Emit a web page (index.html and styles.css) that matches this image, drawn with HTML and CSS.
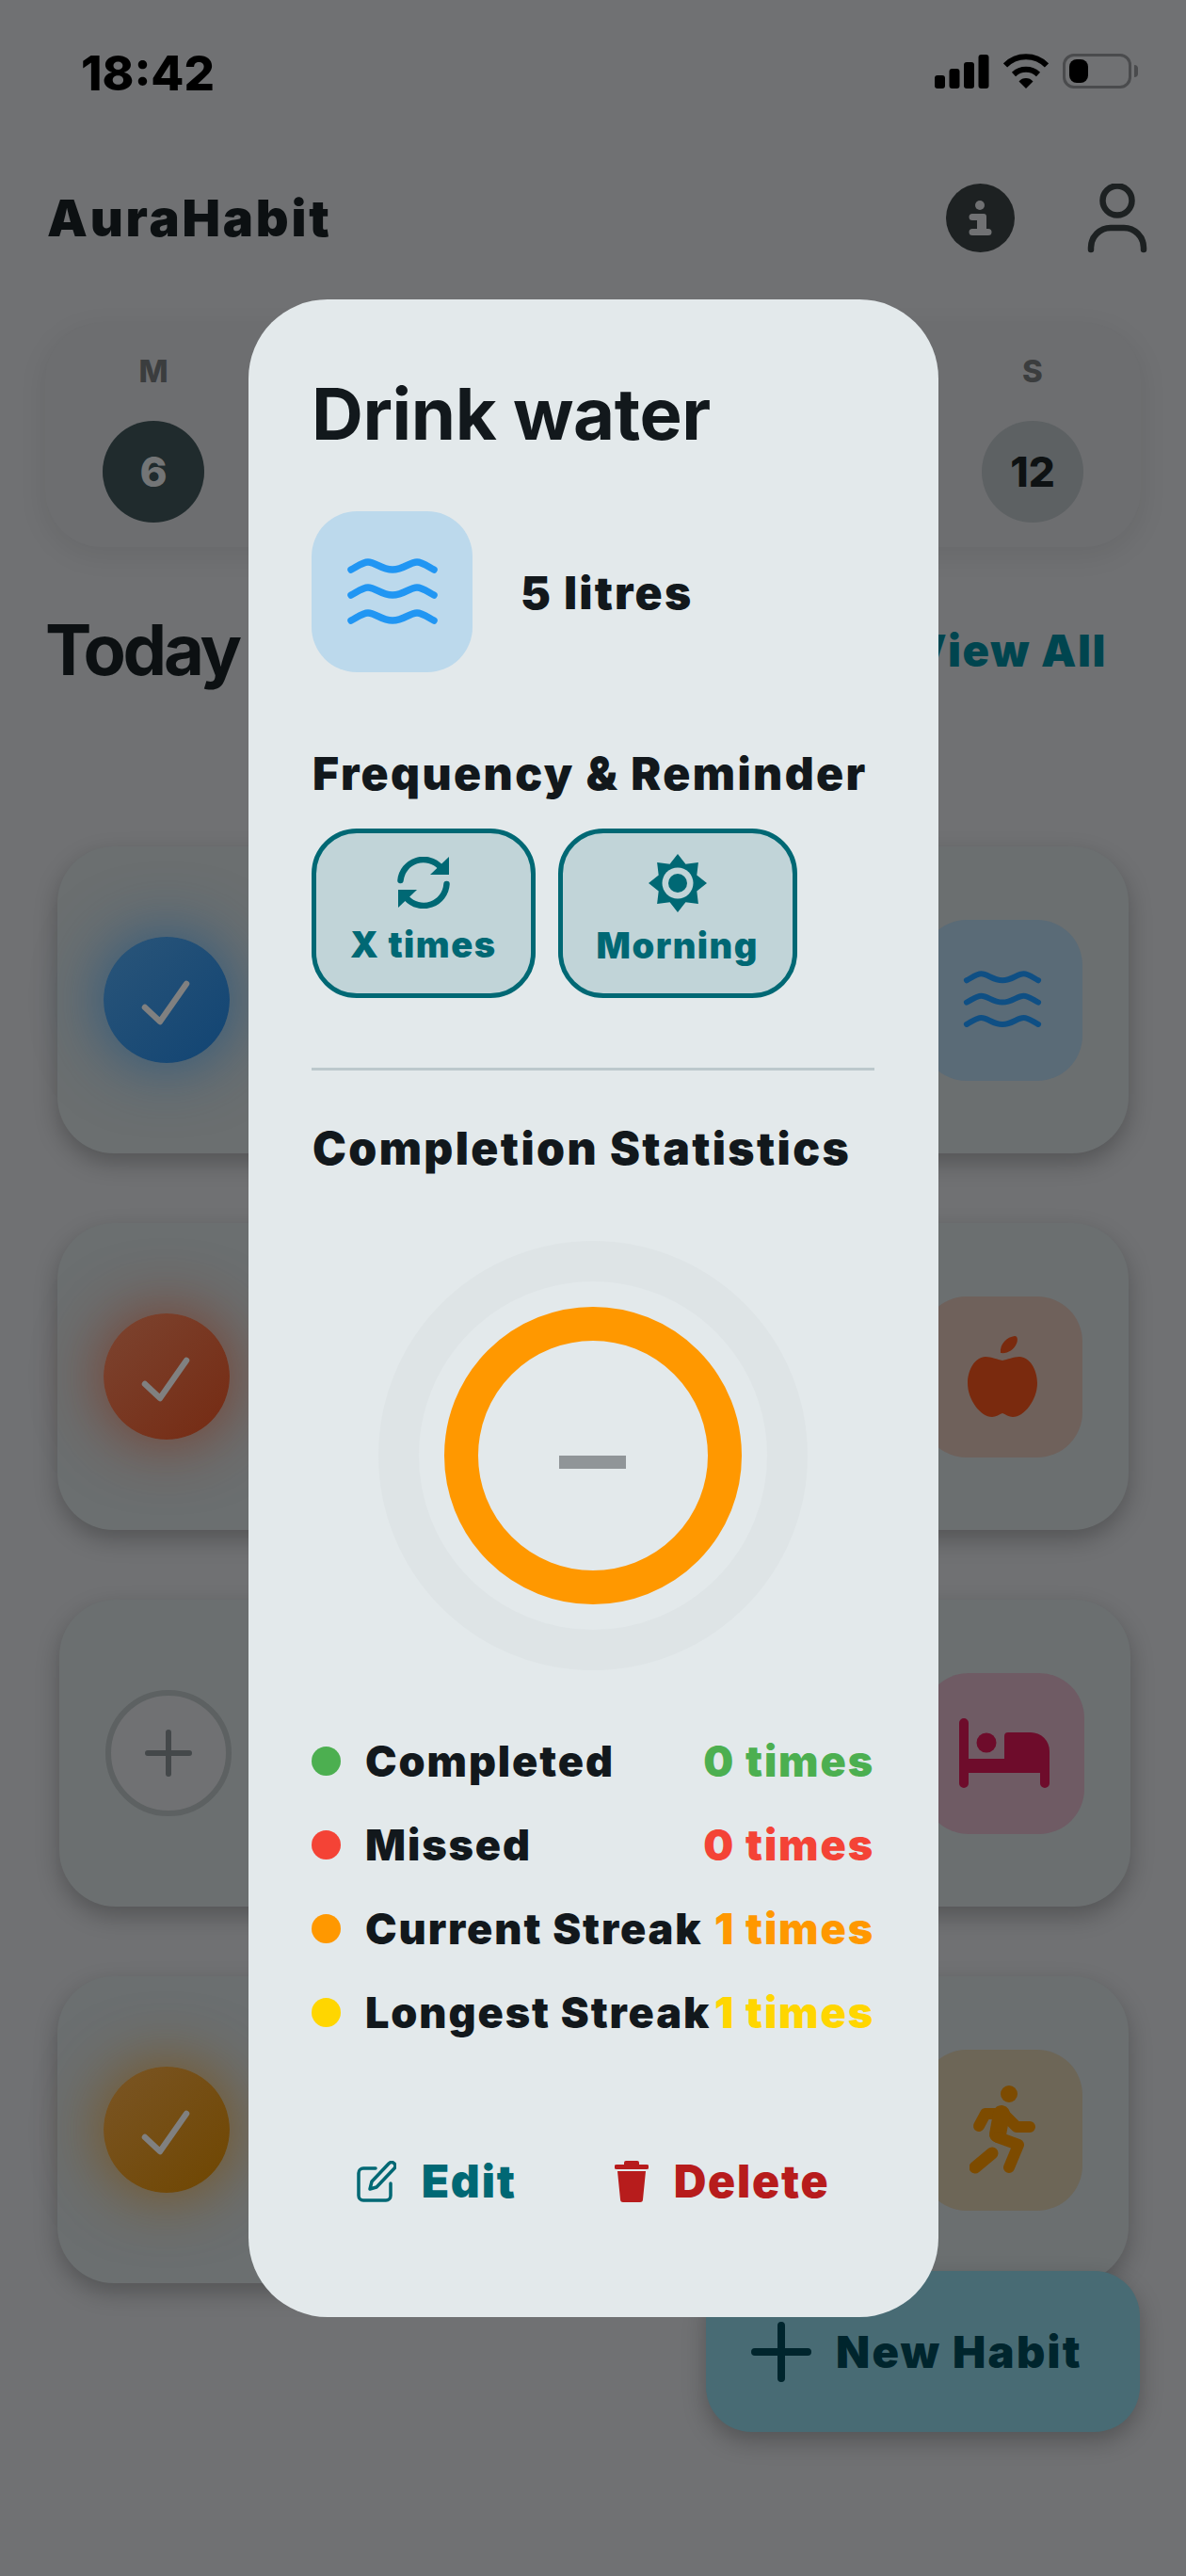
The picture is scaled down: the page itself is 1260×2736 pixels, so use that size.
FILE: index.html
```html
<!DOCTYPE html>
<html lang="en">
<head>
    <meta charset="UTF-8">
    <meta name="viewport" content="width=device-width, initial-scale=1.0">
    <title>AuraHabit</title>
    <link rel="stylesheet" href="styles.css">
</head>
<body>
    <div class="screen">
        <!-- Status bar -->
        <div class="status-bar">
            <span class="clock">18:42</span>
            <div class="status-icons">
                <svg width="58" height="36" viewBox="0 0 58 36" fill="#000">
                    <rect x="0" y="22" width="11" height="14" rx="3"/>
                    <rect x="15.5" y="15" width="11" height="21" rx="3"/>
                    <rect x="31" y="8" width="11" height="28" rx="3"/>
                    <rect x="46.5" y="0" width="11" height="36" rx="3"/>
                </svg>
                <svg width="48" height="37" viewBox="0 0 48 37" fill="none" stroke="#000" stroke-width="6">
                    <path d="M2 12.5A31 31 0 0 1 46 12.5"/>
                    <path d="M11 22A19 19 0 0 1 37 22"/>
                    <path d="M16.5 29.5A10 10 0 0 1 31.5 29.5L24 37Z" fill="#000" stroke="none"/>
                </svg>
                <div class="battery"><div class="battery-fill"></div></div>
                <div class="battery-nub"></div>
            </div>
        </div>

        <!-- Header -->
        <div class="app-header">
            <h1 class="app-title">AuraHabit</h1>
            <div class="header-icons">
                <svg width="73" height="73" viewBox="0 0 73 73">
                    <circle cx="36.5" cy="36.5" r="36.5" fill="#1d2122"/>
                    <circle cx="36" cy="23" r="5" fill="#707173"/>
                    <path d="M28 32h12a3 3 0 0 1 3 3v13h2a3.5 3.5 0 0 1 0 7H28a3.5 3.5 0 0 1 0-7h5v-9h-5a3.5 3.5 0 0 1 0-7z" fill="#707173"/>
                </svg>
                <svg width="64" height="74" viewBox="0 0 64 74" fill="none" stroke="#1d2122" stroke-width="6.5" stroke-linecap="round">
                    <circle cx="32" cy="18" r="15.5"/>
                    <path d="M4 70V68A21 21 0 0 1 25 47H39A21 21 0 0 1 60 68V70"/>
                </svg>
            </div>
        </div>

        <!-- Week strip -->
        <div class="week-card">
            <div class="day">
                <span class="day-name">M</span>
                <span class="day-num day-num-active">6</span>
            </div>
            <div class="day">
                <span class="day-name">S</span>
                <span class="day-num">12</span>
            </div>
        </div>

        <div class="section-head">
            <h2 class="section-title">Today</h2>
            <a class="view-all">View All</a>
        </div>

        <!-- Habit list, sits behind the dialog -->
        <div class="habit-list">
            <div class="habit">
                <div class="habit-check check-blue">
                    <svg width="134" height="134" viewBox="0 0 134 134" fill="none" stroke="#808080" stroke-width="6.5" stroke-linecap="round" stroke-linejoin="round"><path d="M44 75L60 90L88 50"/></svg>
                </div>
                <div class="habit-icon box-blue">
                    <svg width="86" height="64" viewBox="0 0 96 74" fill="none" stroke="#0f4f84" stroke-width="7" stroke-linecap="round">
                        <path d="M4 13C10 10 16 5 22 5C30 5 36 13 48 13C60 13 66 5 74 5C80 5 86 10 92 13"/>
                        <path d="M4 40C10 37 16 32 22 32C30 32 36 40 48 40C60 40 66 32 74 32C80 32 86 37 92 40"/>
                        <path d="M4 67C10 64 16 59 22 59C30 59 36 67 48 67C60 67 66 59 74 59C80 59 86 64 92 67"/>
                    </svg>
                </div>
            </div>
            <div class="habit">
                <div class="habit-check check-red">
                    <svg width="134" height="134" viewBox="0 0 134 134" fill="none" stroke="#808080" stroke-width="6.5" stroke-linecap="round" stroke-linejoin="round"><path d="M44 75L60 90L88 50"/></svg>
                </div>
                <div class="habit-icon box-red">
                    <svg width="74" height="86" viewBox="0 0 74 86" fill="#7a2a0e">
                        <path d="M37 26C42 25 49 22 55 22C66 22 74 36 74 50C74 68 60 86 48 86C44 86 40 83 37 82C34 83 30 86 26 86C14 86 0 68 0 50C0 36 8 22 19 22C25 22 32 25 37 26Z"/>
                        <path d="M35 18C34 8 42 1 50 0C54 0 53 6 52 8C49 15 42 19 35 18Z"/>
                    </svg>
                </div>
            </div>
            <div class="habit habit-shifted">
                <div class="habit-check check-empty">
                    <svg width="50" height="50" viewBox="0 0 50 50" stroke="#44484a" stroke-width="6" stroke-linecap="round"><path d="M25 3V47M3 25H47"/></svg>
                </div>
                <div class="habit-icon box-pink">
                    <svg width="96" height="74" viewBox="0 0 96 74" fill="#6e0c2b">
                        <path d="M5 0a5 5 0 0 1 5 5v38h38V19a4 4 0 0 1 4-4h24a20 20 0 0 1 20 20v34a5 5 0 0 1-10 0V58H10v11a5 5 0 0 1-10 0V5a5 5 0 0 1 5-5z"/>
                        <circle cx="29" cy="26" r="10.5"/>
                    </svg>
                </div>
            </div>
            <div class="habit">
                <div class="habit-check check-orange">
                    <svg width="134" height="134" viewBox="0 0 134 134" fill="none" stroke="#808080" stroke-width="6.5" stroke-linecap="round" stroke-linejoin="round"><path d="M44 75L60 90L88 50"/></svg>
                </div>
                <div class="habit-icon box-orange">
                    <svg width="70" height="94" viewBox="0 0 70 94" fill="none" stroke="#7d4b00" stroke-width="12" stroke-linecap="round" stroke-linejoin="round">
                        <circle cx="42" cy="9" r="9" fill="#7d4b00" stroke="none"/>
                        <path d="M10 43L17 30H36L50 44H64"/>
                        <path d="M34 30L30 52" stroke-width="18"/>
                        <path d="M30 55L52 63L42 87"/>
                        <path d="M24 72L6 87" stroke-width="13"/>
                    </svg>
                </div>
            </div>
        </div>

        <button class="new-habit">
            <svg width="64" height="64" viewBox="0 0 64 64" stroke="#00252d" stroke-width="8" stroke-linecap="round"><path d="M32 4V60M4 32H60"/></svg>
            New Habit
        </button>

        <!-- Habit detail dialog -->
        <div class="dialog">
            <h2 class="dialog-title">Drink water</h2>

            <div class="goal-row">
                <div class="goal-icon">
                    <svg width="96" height="74" viewBox="0 0 96 74" fill="none" stroke="#2196f3" stroke-width="7.5" stroke-linecap="round">
                        <path d="M4 13C10 10 16 5 22 5C30 5 36 13 48 13C60 13 66 5 74 5C80 5 86 10 92 13"/>
                        <path d="M4 40C10 37 16 32 22 32C30 32 36 40 48 40C60 40 66 32 74 32C80 32 86 37 92 40"/>
                        <path d="M4 67C10 64 16 59 22 59C30 59 36 67 48 67C60 67 66 59 74 59C80 59 86 64 92 67"/>
                    </svg>
                </div>
                <span class="goal-text">5 litres</span>
            </div>

            <h3 class="dialog-heading heading-frequency">Frequency &amp; Reminder</h3>
            <div class="chips">
                <div class="chip">
                    <svg width="56" height="55" viewBox="0 0 56 55" fill="#006874">
                        <path d="M3.5 25A24.5 24.5 0 0 1 46 11M52.5 29A24.5 24.5 0 0 1 10 44" fill="none" stroke="#006874" stroke-width="6.5" stroke-linecap="round"/>
                        <path d="M55 0V19H35Z"/>
                        <path d="M1 54V35H21Z"/>
                    </svg>
                    <span>X times</span>
                </div>
                <div class="chip">
                    <svg width="62" height="62" viewBox="0 0 62 62" class="sun">
                        <polygon fill="#006874" points="62,31 51.3,22.6 52.9,9.1 39.4,10.7 31,0 22.6,10.7 9.1,9.1 10.7,22.6 0,31 10.7,39.4 9.1,52.9 22.6,51.3 31,62 39.4,51.3 52.9,52.9 51.3,39.4"/>
                        <circle cx="31" cy="31" r="16.5" fill="#c1d4d8"/>
                        <circle cx="31" cy="31" r="10" fill="#006874"/>
                    </svg>
                    <span>Morning</span>
                </div>
            </div>

            <div class="divider"></div>

            <h3 class="dialog-heading heading-stats">Completion Statistics</h3>
            <div class="ring">
                <svg width="456" height="456" viewBox="0 0 456 456" fill="none">
                    <circle cx="228" cy="228" r="206.5" stroke="#dee4e6" stroke-width="43"/>
                    <circle cx="228" cy="228" r="140" stroke="#ff9800" stroke-width="36"/>
                </svg>
                <div class="ring-dash"></div>
            </div>

            <div class="stats">
                <div class="stat"><span class="dot dot-green"></span><span class="stat-label">Completed</span><span class="stat-value val-green">0 times</span></div>
                <div class="stat"><span class="dot dot-red"></span><span class="stat-label">Missed</span><span class="stat-value val-red">0 times</span></div>
                <div class="stat"><span class="dot dot-orange"></span><span class="stat-label">Current Streak</span><span class="stat-value val-orange">1 times</span></div>
                <div class="stat"><span class="dot dot-yellow"></span><span class="stat-label">Longest Streak</span><span class="stat-value val-yellow">1 times</span></div>
            </div>

            <div class="actions">
                <a class="action action-edit">
                    <svg width="42" height="44" viewBox="0 0 42 44" fill="none" stroke="#006874" stroke-width="3.5" stroke-linecap="round" stroke-linejoin="round">
                        <path d="M20 8H7A5 5 0 0 0 2 13V37A5 5 0 0 0 7 42H31A5 5 0 0 0 36 37V24"/>
                        <path d="M14 30L16 22L34 3C36 1 38 1 40 3C41.500 5 41 7 39.500 8.500L21 28Z"/>
                    </svg>
                    Edit
                </a>
                <a class="action action-delete">
                    <svg width="36" height="44" viewBox="0 0 36 44" fill="#b71c1c">
                        <path d="M12 0H24A2 2 0 0 1 26 2V4H34A2 2 0 0 1 34 9H2A2 2 0 0 1 2 4H10V2A2 2 0 0 1 12 0Z"/>
                        <path d="M3 11H33L30 41A3 3 0 0 1 27 44H9A3 3 0 0 1 6 41Z"/>
                    </svg>
                    Delete
                </a>
            </div>
        </div>
    </div>
</body>
</html>
```

FILE: styles.css
```css
/* General Styles */
* {
    box-sizing: border-box;
}

body {
    margin: 0;
    font-family: Inter, "Liberation Sans", sans-serif;
    background-color: #707173;
}

h1, h2, h3 {
    margin: 0;
}

.screen {
    position: relative;
    width: 1260px;
    height: 2736px;
    overflow: hidden;
    background-color: #707173;
}

/* Status bar */
.status-bar {
    display: flex;
    justify-content: space-between;
    align-items: flex-start;
    height: 195px;
    padding: 49px 51px 0 86px;
}

.clock {
    font-size: 51px;
    font-weight: 800;
    line-height: 58px;
    color: #000;
}

.status-icons {
    display: flex;
    align-items: center;
    padding-top: 8px;
}

.status-icons svg:first-child {
    margin-right: 15px;
}

.battery {
    width: 73px;
    height: 37px;
    margin-left: 15px;
    padding: 3px 4px;
    border: 3px solid #4a4b4d;
    border-radius: 12px;
}

.battery-fill {
    width: 20px;
    height: 100%;
    background-color: #000;
    border-radius: 8px;
}

.battery-nub {
    width: 4px;
    height: 13px;
    margin-left: 3px;
    background-color: #4a4b4d;
    border-radius: 0 6px 6px 0;
}

/* Header */
.app-header {
    display: flex;
    justify-content: space-between;
    align-items: center;
    height: 73px;
    padding: 0 41px 0 50px;
}

.app-title {
    font-size: 54px;
    font-weight: 900;
    letter-spacing: 2.8px;
    color: #0c1012;
}

.header-icons {
    display: flex;
    align-items: center;
    gap: 77px;
}

/* Week strip */
.week-card {
    display: flex;
    justify-content: space-between;
    height: 238px;
    margin: 75px 48px 0;
    padding: 31px 61px 0;
    background-color: #6d6e70;
    border-radius: 60px;
    box-shadow: 0 8px 30px rgba(0, 0, 0, 0.08);
}

.day {
    display: flex;
    flex-direction: column;
    align-items: center;
    gap: 33px;
}

.day-name {
    font-size: 33px;
    font-weight: 800;
    line-height: 40px;
    color: #3b3d3e;
}

.day-num {
    display: flex;
    justify-content: center;
    align-items: center;
    width: 108px;
    height: 108px;
    border-radius: 50%;
    font-size: 44px;
    font-weight: 800;
    background-color: #5d6163;
    color: #0e1213;
}

.day-num-active {
    background-color: #202b2d;
    color: #737576;
}

/* Today heading */
.section-head {
    display: flex;
    justify-content: space-between;
    align-items: center;
    height: 72px;
    margin-top: 73px;
    padding: 0 84px 0 48px;
}

.section-title {
    font-size: 74px;
    font-weight: 700;
    line-height: 72px;
    letter-spacing: -3.2px;
    color: #0c1012;
}

.view-all {
    font-size: 47px;
    font-weight: 900;
    letter-spacing: 1.6px;
    color: #00454f;
}

/* Habit cards */
.habit-list {
    display: flex;
    flex-direction: column;
    gap: 74px;
    margin-top: 173px;
}

.habit {
    display: flex;
    justify-content: space-between;
    align-items: center;
    height: 326px;
    margin: 0 61px;
    padding: 0 49px;
    background-color: #6b6f70;
    border-radius: 60px;
    box-shadow: 0 10px 24px rgba(0, 0, 0, 0.25);
}

.habit-shifted {
    margin: 0 59px 0 63px;
}

.habit-check {
    display: flex;
    justify-content: center;
    align-items: center;
    width: 134px;
    height: 134px;
    border-radius: 50%;
}

.check-blue {
    background: linear-gradient(135deg, #2a5579, #114473);
    box-shadow: 0 0 70px rgba(20, 80, 130, 0.8);
}

.check-red {
    background: linear-gradient(135deg, #7c4430, #752a12);
    box-shadow: 0 0 70px rgba(125, 45, 20, 0.8);
}

.check-orange {
    background: linear-gradient(135deg, #7a5525, #6f4600);
    box-shadow: 0 0 70px rgba(125, 75, 0, 0.8);
}

.check-empty {
    background-color: #707173;
    border: 6px solid #5d6162;
}

.habit-icon {
    display: flex;
    justify-content: center;
    align-items: center;
    width: 171px;
    height: 171px;
    border-radius: 48px;
}

.box-blue { background-color: #5a6b77; }
.box-red { background-color: #6f615b; }
.box-pink { background-color: #6f5b64; }
.box-orange { background-color: #6d6657; }

/* New habit button */
.new-habit {
    position: absolute;
    left: 750px;
    top: 2412px;
    display: flex;
    align-items: flex-start;
    gap: 26px;
    width: 461px;
    height: 171px;
    padding: 54px 0 0 48px;
    border: none;
    border-radius: 48px;
    font-family: inherit;
    font-size: 47px;
    font-weight: 900;
    line-height: 64px;
    letter-spacing: 2.3px;
    background-color: #486b74;
    color: #00252d;
    box-shadow: 0 10px 24px rgba(0, 0, 0, 0.25);
}

/* Dialog */
.dialog {
    position: absolute;
    left: 264px;
    top: 318px;
    width: 733px;
    height: 2143px;
    padding: 85px 68px 0 67px;
    background-color: #e3e9eb;
    border-radius: 84px;
}

.dialog-title {
    font-size: 76px;
    font-weight: 700;
    line-height: 72px;
    letter-spacing: -0.4px;
    color: #12181c;
}

.goal-row {
    display: flex;
    align-items: center;
    gap: 51px;
    margin-top: 68px;
}

.goal-icon {
    display: flex;
    justify-content: center;
    align-items: center;
    width: 171px;
    height: 171px;
    border-radius: 48px;
    background-color: #bcd9ec;
}

.goal-text {
    padding-top: 2px;
    font-size: 48px;
    font-weight: 900;
    letter-spacing: 2.2px;
    color: #12181c;
}

.dialog-heading {
    padding-left: 1px;
    font-size: 48px;
    font-weight: 900;
    line-height: 58px;
    letter-spacing: 2.4px;
    color: #12181c;
}

.heading-frequency {
    margin-top: 79px;
}

.heading-stats {
    margin-top: 54px;
}

.chips {
    display: flex;
    gap: 24px;
    margin-top: 29px;
}

.chip {
    display: flex;
    flex-direction: column;
    align-items: center;
    height: 180px;
    padding: 25px 36px 0;
    border: 5px solid #006874;
    border-radius: 48px;
    background-color: #c1d4d8;
    font-size: 38px;
    font-weight: 900;
    line-height: 46px;
    letter-spacing: 1.5px;
    color: #006874;
}

.chip span {
    margin-top: 15px;
}

.chip .sun {
    margin-top: -3px;
}

.chip .sun + span {
    margin-top: 12px;
}

.divider {
    height: 3px;
    margin-top: 74px;
    background-color: #bcc8cc;
}

.ring {
    position: relative;
    width: 456px;
    height: 456px;
    margin: 69px auto 0;
}

.ring-dash {
    position: absolute;
    left: 192px;
    top: 228px;
    width: 71px;
    height: 14px;
    background-color: #909598;
}

.stats {
    display: flex;
    flex-direction: column;
    gap: 34px;
    margin-top: 69px;
}

.stat {
    display: flex;
    align-items: center;
    height: 55px;
    font-size: 45px;
    font-weight: 900;
    letter-spacing: 1.9px;
}

.stat-label {
    flex: 1;
    white-space: nowrap;
    color: #12181c;
}

.dot {
    width: 31px;
    height: 31px;
    margin-right: 26px;
    border-radius: 50%;
}

.dot-green { background-color: #4caf50; }
.dot-red { background-color: #f44336; }
.dot-orange { background-color: #ff9800; }
.dot-yellow { background-color: #ffd600; }

.val-green { color: #4caf50; }
.val-red { color: #f44336; }
.val-orange { color: #ff9800; }
.val-yellow { color: #ffd600; }

.actions {
    display: flex;
    justify-content: center;
    gap: 104px;
    margin-top: 122px;
}

.action {
    display: flex;
    align-items: center;
    gap: 27px;
    font-size: 48px;
    font-weight: 900;
    letter-spacing: 1.8px;
}

.action-edit { color: #006874; }
.action-delete { color: #b71c1c; }
```
